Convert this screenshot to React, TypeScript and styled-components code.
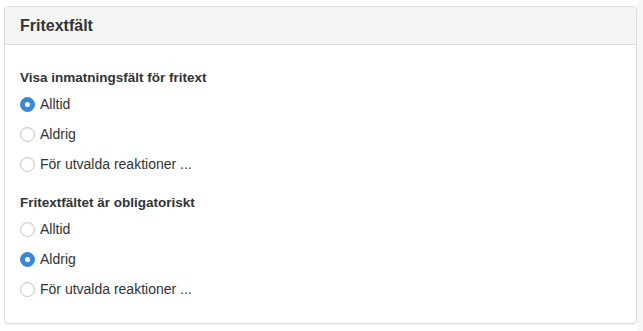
import styled, { createGlobalStyle } from "styled-components";

const GlobalStyle = createGlobalStyle`
  html, body {
    margin: 0;
    padding: 0;
  }
  body {
    background: linear-gradient(to right, #ffffff 637px, #f8f8f8 637px);
    font-family: "Liberation Sans", Arial, sans-serif;
    color: #333333;
  }
`;

const Page = styled.div`
  padding: 6px 6px 6px 4px;
`;

const Panel = styled.section`
  border: 1px solid #dddddd;
  border-radius: 4px;
  background: #ffffff;
  box-shadow: 0 1px 1px rgba(0, 0, 0, 0.05);
  overflow: hidden;
`;

const PanelHeader = styled.header`
  height: 37px;
  display: flex;
  align-items: center;
  padding: 0 15px;
  background: #f5f5f5;
  border-bottom: 1px solid #dddddd;
`;

const PanelTitle = styled.h3`
  margin: 0;
  font-size: 16px;
  font-weight: bold;
  color: #333333;
`;

const PanelBody = styled.div`
  padding: 24px 15px 19px;
  display: flex;
  flex-direction: column;
  gap: 15px;
`;

const Group = styled.fieldset`
  margin: 0;
  padding: 0;
  border: 0;
`;

const GroupLabel = styled.legend`
  padding: 0;
  height: 18px;
  line-height: 18px;
  margin-bottom: 2px;
  font-size: 13.5px;
  font-weight: bold;
`;

const Option = styled.label`
  height: 30px;
  display: flex;
  align-items: center;
  gap: 5px;
  font-size: 14px;
  cursor: pointer;
`;

const Radio = styled.span<{ $checked?: boolean }>`
  box-sizing: border-box;
  width: 15px;
  height: 15px;
  border-radius: 50%;
  flex: none;
  display: flex;
  align-items: center;
  justify-content: center;
  background: ${(p) => (p.$checked ? "#3b86d6" : "#ffffff")};
  border: 1px solid ${(p) => (p.$checked ? "#3b86d6" : "#c4c4c4")};
  box-shadow: ${(p) => (p.$checked ? "none" : "inset 0 1px 1px rgba(0,0,0,0.06)")};

  &::after {
    content: "";
    width: 5px;
    height: 5px;
    border-radius: 50%;
    background: #ffffff;
    display: ${(p) => (p.$checked ? "block" : "none")};
  }
`;

const options = ["Alltid", "Aldrig", "För utvalda reaktioner ..."];

const groups = [
  { label: "Visa inmatningsfält för fritext", selected: 0 },
  { label: "Fritextfältet är obligatoriskt", selected: 1 },
];

export default function App() {
  return (
    <>
      <GlobalStyle />
      <Page>
        <Panel>
          <PanelHeader>
            <PanelTitle>Fritextfält</PanelTitle>
          </PanelHeader>
          <PanelBody>
            {groups.map((g) => (
              <Group key={g.label}>
                <GroupLabel>{g.label}</GroupLabel>
                {options.map((o, i) => (
                  <Option key={o}>
                    <Radio $checked={i === g.selected} />
                    {o}
                  </Option>
                ))}
              </Group>
            ))}
          </PanelBody>
        </Panel>
      </Page>
    </>
  );
}
